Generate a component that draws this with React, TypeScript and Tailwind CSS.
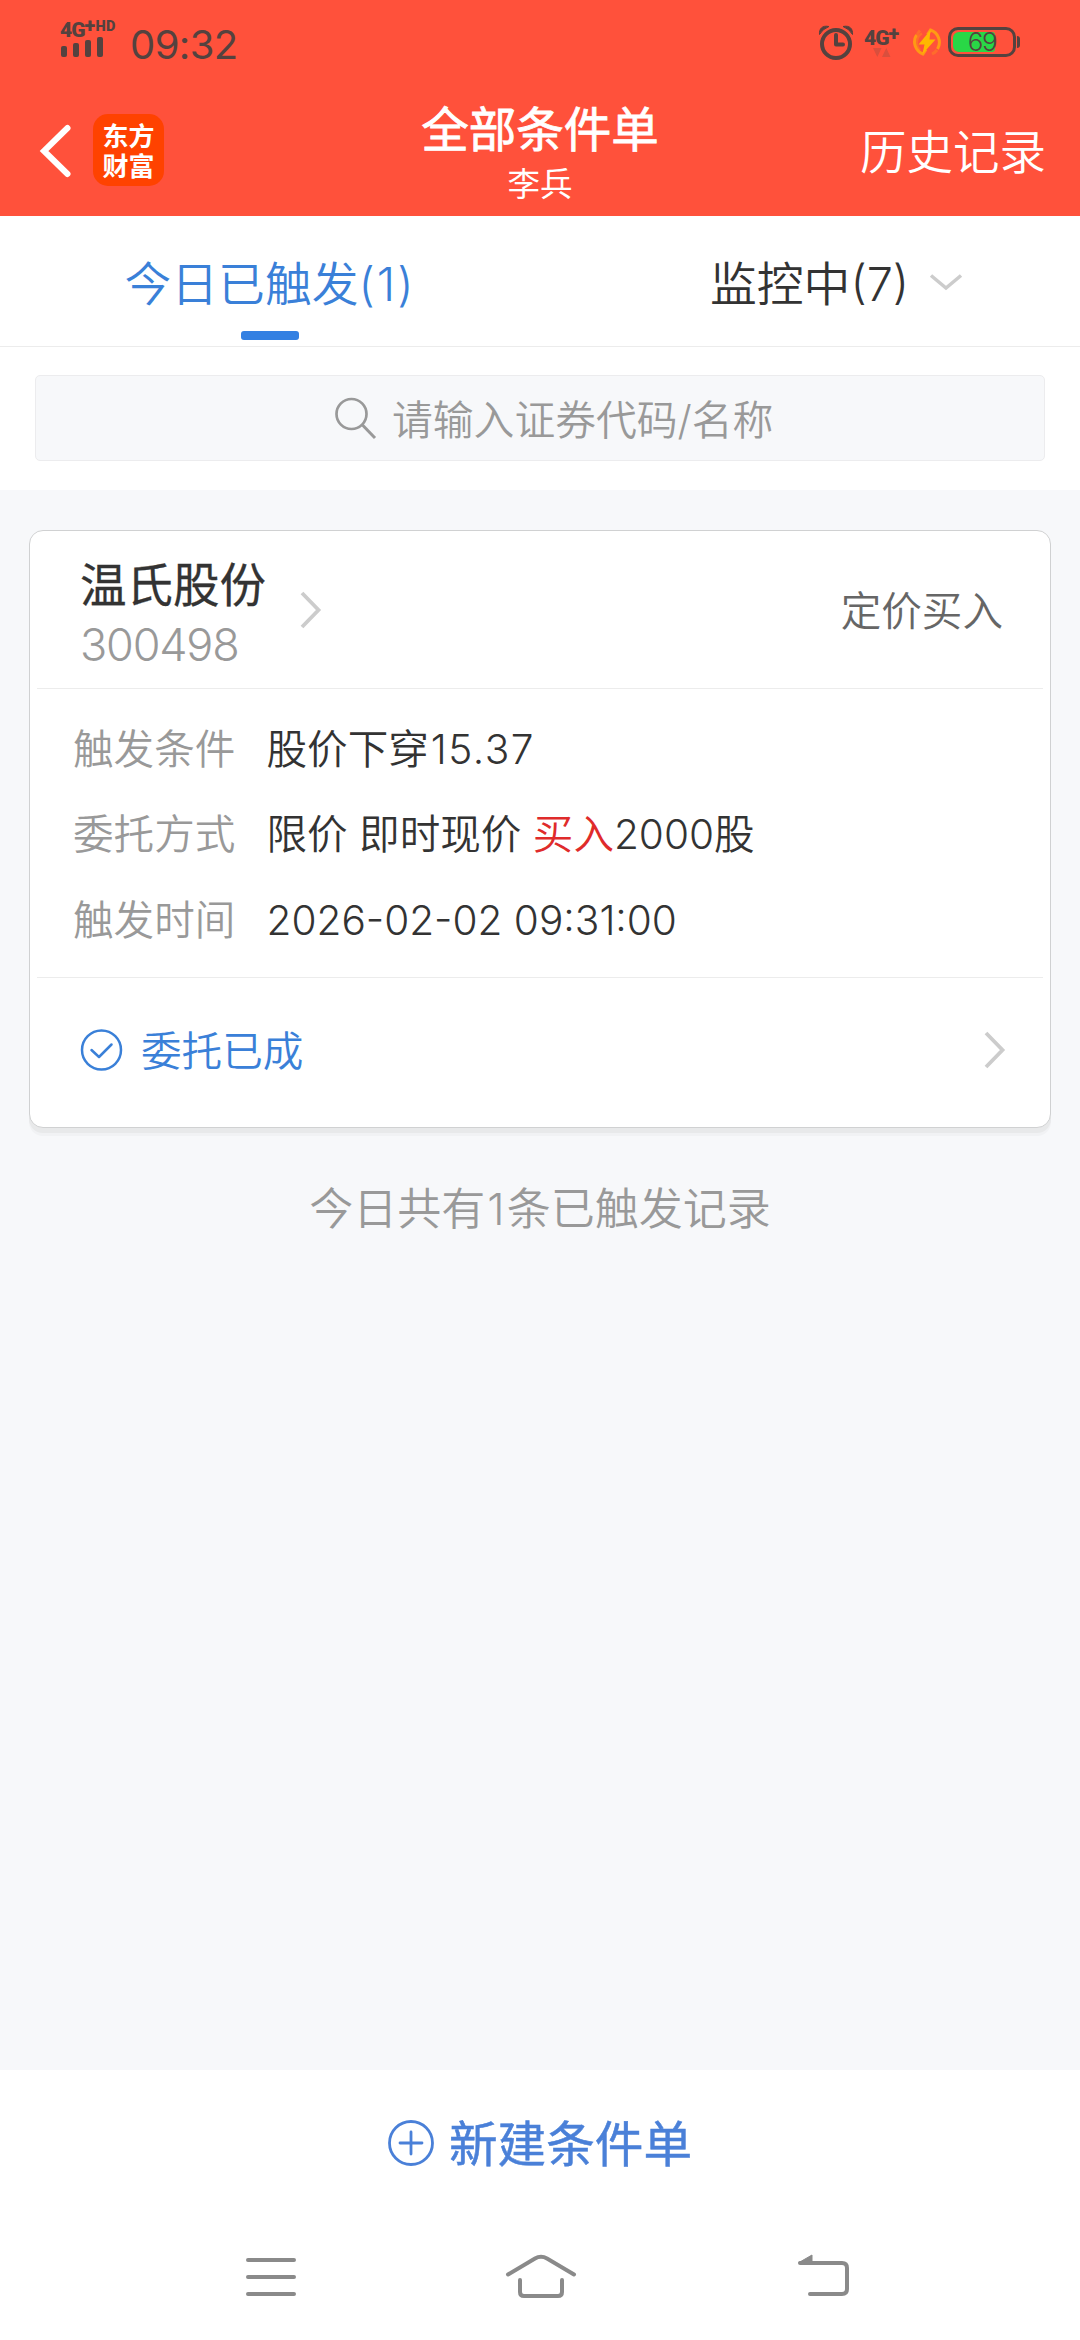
import type { ReactNode } from 'react';

const SIGNAL_BARS = ['h-[11px]', 'h-[14px]', 'h-[17px]', 'h-[20px]'];

function StatusBar() {
  return (
    <div className="flex h-[86px] shrink-0 items-start pl-[60px] text-[#54423f]">
      <div className="flex w-[72px] shrink-0 flex-col pt-[20px]">
        <div className="flex h-[18px] items-start font-[Roboto] font-black">
          <span className="text-[21px] leading-[20px] tracking-[-1px]">4G</span>
          <span className="mt-[-3px] w-[11px] text-[20px] leading-[16px]">+</span>
          <span className="mt-[1px] text-[14.500px] leading-[12px] tracking-[0.200px]">HD</span>
        </div>
        <div className="mt-[-1px] flex h-[20px] items-end gap-[6px] pl-px">
          {SIGNAL_BARS.map((h) => (
            <span key={h} className={`w-[6px] rounded-[2px] bg-[#54423f] ${h}`} />
          ))}
        </div>
      </div>
      <span className="mt-[20px] -ml-[2px] text-[40px] leading-[50px] tracking-[-0.600px]">09:32</span>
      <div className="ml-auto flex h-[84px] items-center pr-[60px]">
        <svg width="36" height="36" viewBox="0 0 36 36" fill="none" stroke="currentColor" className="mr-[10px]">
          <circle cx="18" cy="20" r="14" strokeWidth="4" />
          <path d="M18 11v9.5h7" strokeWidth="4" strokeLinecap="round" strokeLinejoin="round" />
          <path d="M1.500 10.500C1 5 4 1 11 2.500Q4.500 5 1.500 10.500ZM34.500 10.500C35 5 32 1 25 2.500Q31.500 5 34.500 10.500Z" fill="currentColor" strokeWidth="1" />
        </svg>
        <div className="mr-[14px] flex w-[34px] flex-col pt-[2px]">
          <div className="flex h-[19px] items-start font-[Roboto] font-black">
            <span className="text-[21px] leading-[20px] tracking-[-1px]">4G</span>
            <span className="mt-[-3px] text-[20px] leading-[16px]">+</span>
          </div>
          <svg width="34" height="12" viewBox="0 0 34 12" fill="#d94f3d">
            <path d="M9 1h8.500L13.300 10ZM18 10h8.500L22.300 1Z" />
          </svg>
        </div>
        <svg width="30" height="30" viewBox="0 0 30 30" fill="none" className="mr-[6px]">
          <path d="M8 3.500a13 13 0 0 0-3 5M20 27a13 13 0 0 0 5-4" stroke="#ff6b2c" strokeWidth="3" />
          <path d="M10 6.500a10.500 10.500 0 0 0-2 16.500" stroke="#ff6f2a" strokeWidth="2.500" />
          <path d="M4.500 8A13 13 0 0 0 11 27l3-4.500" stroke="#ff9a14" strokeWidth="3" />
          <path d="M25.500 22A13 13 0 0 0 18.500 3l-3 4.500" stroke="#ff9a14" strokeWidth="3" />
          <path d="M18.500 3 6.500 17.500h6L10.500 27 23.500 12.500h-6Z" fill="#ffb700" />
        </svg>
        <div className="flex items-center">
          <div className="relative flex h-[30px] w-[68px] items-center rounded-[10px] border-[3px] border-current p-[2px]">
            <span className="h-full w-[42px] rounded-l-[6px] rounded-r-[3px] bg-[#29d746]" />
            <span className="absolute inset-0 text-center text-[26px] leading-[24px] font-light tracking-[-1.500px]">69</span>
          </div>
          <span className="ml-px h-[12px] w-[3px] rounded-r-full bg-current" />
        </div>
      </div>
    </div>
  );
}

function TitleBar() {
  return (
    <div className="grid h-[130px] shrink-0 grid-cols-3 text-white">
      <div className="flex items-start pl-[38px] pt-[28px]">
        <svg width="36" height="74" viewBox="0 0 36 74" fill="none" stroke="currentColor" strokeWidth="6" strokeLinecap="round">
          <path d="M29.500 14 6 37l23.500 23" strokeLinejoin="miter" />
        </svg>
        <div className="ml-[19px] flex h-[72px] w-[71px] flex-col items-center justify-center rounded-[15px] bg-[#ff4200] pt-[3px] font-['Liberation_Sans','Noto_Sans_CJK_SC',sans-serif] text-[26px] leading-[30px] font-bold">
          <span>东方</span>
          <span>财富</span>
        </div>
      </div>
      <div className="flex flex-col items-center pt-[14px]">
        <h1 className="text-[47.500px] leading-[60px] font-normal whitespace-nowrap [-webkit-text-stroke:0.8px_currentColor]">全部条件单</h1>
        <span className="mt-[5px] text-[32.500px] leading-[40px]">李兵</span>
      </div>
      <div className="flex justify-end pt-[36px] pr-[34px]">
        <span className="text-[46.500px] leading-[60px] font-[350]">历史记录</span>
      </div>
    </div>
  );
}

function Tabs() {
  return (
    <div className="grid h-[131px] shrink-0 grid-cols-2 border-b border-[#ececec] bg-white text-[46.800px] leading-[60px]">
      <div className="flex flex-col items-center pt-[38px] text-[#3a80d8]">
        <span className="h-[77px] font-[350] whitespace-nowrap">
          今日已触发<span className="tracking-[2px]">(1)</span>
        </span>
        <span className="h-[9px] w-[58px] rounded-[3px] bg-[#3380e2]" />
      </div>
      <div className="flex items-start pt-[38px] pl-[170px] text-[#333]">
        <span className="font-[350]">监控中(7)</span>
        <svg width="34" height="20" viewBox="0 0 34 20" fill="none" stroke="#ccc" strokeWidth="3.500" className="mt-[18px] ml-[20px]">
          <path d="m2 3.500 15 12.500 15-12.500" />
        </svg>
      </div>
    </div>
  );
}

function Search() {
  return (
    <div className="h-[143px] shrink-0 bg-white px-[35px] pt-[28px]">
      <div className="flex h-[86px] items-center rounded-[5px] border border-[#ececee] bg-[#f7f8fa] pl-[298px] text-[#999]">
        <svg width="44" height="44" viewBox="0 0 44 44" fill="none" stroke="currentColor" strokeWidth="2.700">
          <circle cx="17.500" cy="18" r="15" />
          <path d="m28 28.500 13 13.500" strokeWidth="3" />
        </svg>
        <span className="mt-[4px] ml-[14px] text-[40.800px] leading-[50px] font-[350]">请输入证券代码/名称</span>
      </div>
    </div>
  );
}

function Chevron() {
  return (
    <svg width="22" height="40" viewBox="0 0 22 40" fill="none" stroke="#ccc" strokeWidth="3.800">
      <path d="m2 3 16.500 17L2 37" />
    </svg>
  );
}

function Row({ label, children }: { label: string; children: ReactNode }) {
  return (
    <div className="flex h-[85.500px] items-center">
      <span className="w-[193.500px] text-[#999]">{label}</span>
      <span className="whitespace-nowrap text-[#333]">{children}</span>
    </div>
  );
}

function OrderCard() {
  return (
    <section className="mx-[29px] mt-[40px] flex h-[598px] shrink-0 flex-col rounded-[14px] border border-[#d0d1d2] bg-white px-[7px] text-[40.600px] leading-[50px] font-[350] shadow-[0_5px_0_#e8e9ea,0_8px_0_#f1f2f4]">
      <div className="flex h-[158px] items-start border-b border-[#ececec] pr-[40px] pl-[43px]">
        <div className="flex flex-col pt-[24px]">
          <span className="text-[46.500px] leading-[60px] font-normal text-[#333] [-webkit-text-stroke:0.3px_currentColor]">温氏股份</span>
          <span className="mt-[4px] text-[45px] leading-[52px] font-light tracking-[-1.200px] text-[#999]">300498</span>
        </div>
        <div className="mt-[59px] ml-[34px]">
          <Chevron />
        </div>
        <span className="mt-[56px] ml-auto text-[#666]">定价买入</span>
      </div>
      <div className="flex h-[289px] flex-col border-b border-[#ececec] pt-[18px] pl-[36px]">
        <Row label="触发条件">
          股价下穿<span className="ml-[2px] tracking-[1.500px]">15.37</span>
        </Row>
        <Row label="委托方式">
          限价 即时现价 <span className="text-[#df2b2b]">买入</span>2000股
        </Row>
        <Row label="触发时间">2026-02-02 09:31:00</Row>
      </div>
      <div className="flex h-[144px] items-center pr-[37px] pl-[43px] text-[#3a80d8]">
        <svg width="43" height="43" viewBox="0 0 43 43" fill="none" stroke="currentColor" strokeWidth="2.500">
          <circle cx="21.500" cy="21" r="19.500" />
          <path d="m11.500 21 7.500 7 12.500-12.500" strokeLinecap="round" strokeLinejoin="round" />
        </svg>
        <span className="mt-[3px] ml-[18px]">委托已成</span>
        <span className="ml-auto">
          <Chevron />
        </span>
      </div>
    </section>
  );
}

function CreateBar() {
  return (
    <div className="flex h-[145px] shrink-0 items-center justify-center bg-white text-[#4a80d8]">
      <svg width="48" height="48" viewBox="0 0 48 48" fill="none" stroke="currentColor" strokeWidth="2.800">
        <circle cx="24" cy="24" r="21.500" />
        <path d="M24 13v22M13 24h22" strokeLinecap="round" />
      </svg>
      <span className="mt-[4px] mr-[1px] ml-[14px] text-[48.600px] leading-[60px] font-normal [-webkit-text-stroke:0.5px_currentColor]">新建条件单</span>
    </div>
  );
}

function NavBar() {
  return (
    <nav className="flex h-[125px] shrink-0 items-start bg-white pt-[35px] pl-[244px] text-[#8a8a8a]">
      <svg width="54" height="54" viewBox="0 0 54 54" stroke="currentColor" strokeWidth="4" strokeLinecap="round">
        <path d="M4 10h46M4 27h46M4 44h46" />
      </svg>
      <svg width="74" height="54" viewBox="0 0 74 54" fill="none" stroke="currentColor" strokeWidth="4" strokeLinecap="round" className="ml-[206px]">
        <path d="M4 24.500 31 8.500q6-3.500 12 0L70 24.500" />
        <path d="M16 30v12q0 4 4 4h34q4 0 4-4V30" />
      </svg>
      <svg width="58" height="54" viewBox="0 0 58 54" fill="none" stroke="currentColor" strokeWidth="4" strokeLinecap="round" className="ml-[218px]">
        <path d="M4 13h42q5 0 5 5v21q0 5-5 5H14" />
        <path d="M3 12.500 16 5v8H4Z" fill="currentColor" strokeWidth="1" strokeLinejoin="round" />
      </svg>
    </nav>
  );
}

export default function App() {
  return (
    <div className="flex h-[2340px] w-[1080px] flex-col overflow-hidden bg-[#f7f8fa] font-[Inter,'Noto_Sans_CJK_SC',sans-serif]">
      <header className="flex h-[216px] shrink-0 flex-col bg-[#ff513b]">
        <StatusBar />
        <TitleBar />
      </header>
      <Tabs />
      <Search />
      <OrderCard />
      <p className="mt-[51px] text-center text-[44px] leading-[60px] font-[350] text-[#999]">
        今日共有<span className="mx-[2px]">1</span>条已触发记录
      </p>
      <div className="flex-1" />
      <CreateBar />
      <NavBar />
    </div>
  );
}
